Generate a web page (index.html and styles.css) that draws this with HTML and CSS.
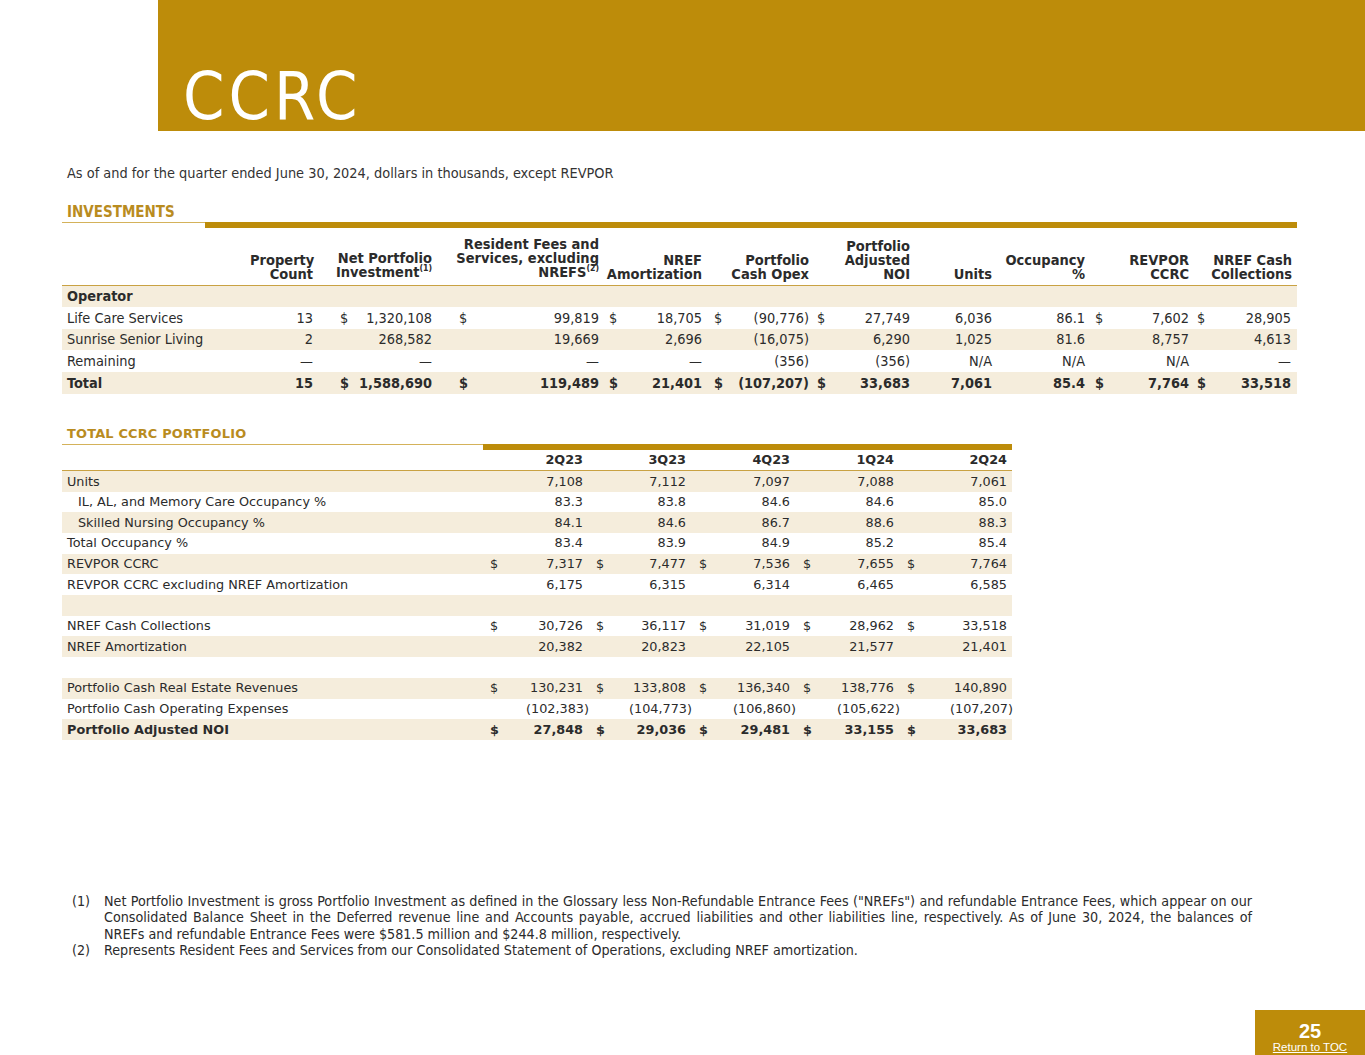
FILE: index.html
```html
<!DOCTYPE html>
<html>
<head>
<meta charset="utf-8">
<link rel="stylesheet" href="styles.css">
</head>
<body>
<div class="page">
  <header class="hero">
    <div class="hero-bar"><h1 class="hero-title">CCRC</h1></div>
  </header>

  <main class="content">
    <p class="subtitle">As of and for the quarter ended June 30, 2024, dollars in thousands, except REVPOR</p>

    <section class="sec sec-inv">
      <h2 class="sec-title">INVESTMENTS</h2>
      <div class="rule"><span class="rule-thin rule-thin-inv"></span><span class="rule-thick"></span></div>
      <table class="tbl tbl-inv">
        <colgroup>
          <col style="width:188px"><col style="width:68px"><col style="width:32px"><col style="width:87px">
          <col style="width:33px"><col style="width:134px"><col style="width:18px"><col style="width:85px">
          <col style="width:18px"><col style="width:89px"><col style="width:16px"><col style="width:85px">
          <col style="width:82px"><col style="width:93px"><col style="width:17px"><col style="width:87px">
          <col style="width:16px"><col style="width:87px">
        </colgroup>
        <thead>
          <tr>
            <th></th>
            <th class="num">Property<br>Count</th>
            <th class="num" colspan="2">Net Portfolio<br>Investment<sup>(1)</sup></th>
            <th class="num" colspan="2">Resident Fees and<br>Services, excluding<br>NREFS<sup>(2)</sup></th>
            <th class="num" colspan="2">NREF<br>Amortization</th>
            <th class="num" colspan="2">Portfolio<br>Cash Opex</th>
            <th class="num" colspan="2">Portfolio<br>Adjusted<br>NOI</th>
            <th class="num">Units</th>
            <th class="num">Occupancy<br>%</th>
            <th class="num" colspan="2">REVPOR<br>CCRC</th>
            <th class="num" colspan="2">NREF Cash<br>Collections</th>
          </tr>
        </thead>
        <tbody>
          <tr class="shade op"><td colspan="18">Operator</td></tr>
          <tr>
            <td>Life Care Services</td><td class="num">13</td>
            <td class="d d1">$</td><td class="num">1,320,108</td>
            <td class="d d1">$</td><td class="num">99,819</td>
            <td class="d">$</td><td class="num">18,705</td>
            <td class="d d2">$</td><td class="num">(90,776)</td>
            <td class="d d3">$</td><td class="num">27,749</td>
            <td class="num">6,036</td><td class="num">86.1</td>
            <td class="d">$</td><td class="num">7,602</td>
            <td class="d d3">$</td><td class="num">28,905</td>
          </tr>
          <tr class="shade">
            <td>Sunrise Senior Living</td><td class="num">2</td>
            <td class="d"></td><td class="num">268,582</td>
            <td class="d"></td><td class="num">19,669</td>
            <td class="d"></td><td class="num">2,696</td>
            <td class="d"></td><td class="num">(16,075)</td>
            <td class="d"></td><td class="num">6,290</td>
            <td class="num">1,025</td><td class="num">81.6</td>
            <td class="d"></td><td class="num">8,757</td>
            <td class="d"></td><td class="num">4,613</td>
          </tr>
          <tr>
            <td>Remaining</td><td class="num">—</td>
            <td class="d"></td><td class="num">—</td>
            <td class="d"></td><td class="num">—</td>
            <td class="d"></td><td class="num">—</td>
            <td class="d"></td><td class="num">(356)</td>
            <td class="d"></td><td class="num">(356)</td>
            <td class="num">N/A</td><td class="num">N/A</td>
            <td class="d"></td><td class="num">N/A</td>
            <td class="d"></td><td class="num">—</td>
          </tr>
          <tr class="shade total">
            <td>Total</td><td class="num">15</td>
            <td class="d d1">$</td><td class="num">1,588,690</td>
            <td class="d d1">$</td><td class="num">119,489</td>
            <td class="d">$</td><td class="num">21,401</td>
            <td class="d d2">$</td><td class="num">(107,207)</td>
            <td class="d d3">$</td><td class="num">33,683</td>
            <td class="num">7,061</td><td class="num">85.4</td>
            <td class="d">$</td><td class="num">7,764</td>
            <td class="d d3">$</td><td class="num">33,518</td>
          </tr>
        </tbody>
      </table>
    </section>

    <section class="sec sec-port">
      <h2 class="sec-title sec-title-wide">TOTAL CCRC PORTFOLIO</h2>
      <div class="rule rule-port"><span class="rule-thin rule-thin-port"></span><span class="rule-thick"></span></div>
      <table class="tbl tbl-port">
        <colgroup>
          <col style="width:420px"><col style="width:20px"><col style="width:86px"><col style="width:20px">
          <col style="width:83px"><col style="width:20px"><col style="width:84px"><col style="width:20px">
          <col style="width:84px"><col style="width:20px"><col style="width:93px">
        </colgroup>
        <thead>
          <tr>
            <th></th>
            <th class="num" colspan="2">2Q23</th>
            <th class="num" colspan="2">3Q23</th>
            <th class="num" colspan="2">4Q23</th>
            <th class="num" colspan="2">1Q24</th>
            <th class="num" colspan="2">2Q24</th>
          </tr>
        </thead>
        <tbody>
          <tr class="shade"><td>Units</td><td></td><td class="num">7,108</td><td></td><td class="num">7,112</td><td></td><td class="num">7,097</td><td></td><td class="num">7,088</td><td></td><td class="num">7,061</td></tr>
          <tr><td class="ind">IL, AL, and Memory Care Occupancy %</td><td></td><td class="num">83.3</td><td></td><td class="num">83.8</td><td></td><td class="num">84.6</td><td></td><td class="num">84.6</td><td></td><td class="num">85.0</td></tr>
          <tr class="shade"><td class="ind">Skilled Nursing Occupancy %</td><td></td><td class="num">84.1</td><td></td><td class="num">84.6</td><td></td><td class="num">86.7</td><td></td><td class="num">88.6</td><td></td><td class="num">88.3</td></tr>
          <tr><td>Total Occupancy %</td><td></td><td class="num">83.4</td><td></td><td class="num">83.9</td><td></td><td class="num">84.9</td><td></td><td class="num">85.2</td><td></td><td class="num">85.4</td></tr>
          <tr class="shade"><td>REVPOR CCRC</td><td class="d">$</td><td class="num">7,317</td><td class="d">$</td><td class="num">7,477</td><td class="d">$</td><td class="num">7,536</td><td class="d">$</td><td class="num">7,655</td><td class="d">$</td><td class="num">7,764</td></tr>
          <tr><td>REVPOR CCRC excluding NREF Amortization</td><td></td><td class="num">6,175</td><td></td><td class="num">6,315</td><td></td><td class="num">6,314</td><td></td><td class="num">6,465</td><td></td><td class="num">6,585</td></tr>
          <tr class="shade"><td colspan="11"></td></tr>
          <tr><td>NREF Cash Collections</td><td class="d">$</td><td class="num">30,726</td><td class="d">$</td><td class="num">36,117</td><td class="d">$</td><td class="num">31,019</td><td class="d">$</td><td class="num">28,962</td><td class="d">$</td><td class="num">33,518</td></tr>
          <tr class="shade"><td>NREF Amortization</td><td></td><td class="num">20,382</td><td></td><td class="num">20,823</td><td></td><td class="num">22,105</td><td></td><td class="num">21,577</td><td></td><td class="num">21,401</td></tr>
          <tr><td colspan="11"></td></tr>
          <tr class="shade"><td>Portfolio Cash Real Estate Revenues</td><td class="d">$</td><td class="num">130,231</td><td class="d">$</td><td class="num">133,808</td><td class="d">$</td><td class="num">136,340</td><td class="d">$</td><td class="num">138,776</td><td class="d">$</td><td class="num">140,890</td></tr>
          <tr><td>Portfolio Cash Operating Expenses</td><td></td><td class="num"><span class="neg">(102,383)</span></td><td></td><td class="num"><span class="neg">(104,773)</span></td><td></td><td class="num"><span class="neg">(106,860)</span></td><td></td><td class="num"><span class="neg">(105,622)</span></td><td></td><td class="num"><span class="neg">(107,207)</span></td></tr>
          <tr class="shade total"><td>Portfolio Adjusted NOI</td><td class="d">$</td><td class="num">27,848</td><td class="d">$</td><td class="num">29,036</td><td class="d">$</td><td class="num">29,481</td><td class="d">$</td><td class="num">33,155</td><td class="d">$</td><td class="num">33,683</td></tr>
        </tbody>
      </table>
    </section>

    <section class="notes">
      <div class="note"><span class="note-n">(1)</span><p class="note-t"><span class="jl">Net Portfolio Investment is gross Portfolio Investment as defined in the Glossary less Non-Refundable Entrance Fees ("NREFs") and refundable Entrance Fees, which appear on our</span> <span class="jl">Consolidated Balance Sheet in the Deferred revenue line and Accounts payable, accrued liabilities and other liabilities line, respectively. As of June 30, 2024, the balances of</span> <span class="jl-last">NREFs and refundable Entrance Fees were $581.5 million and $244.8 million, respectively.</span></p></div>
      <div class="note"><span class="note-n">(2)</span><p class="note-t">Represents Resident Fees and Services from our Consolidated Statement of Operations, excluding NREF amortization.</p></div>
    </section>
  </main>

  <footer class="pager">
    <div class="pager-box"><span class="pager-num">25</span><a class="pager-link" href="#">Return to TOC</a></div>
  </footer>
</div>
</body>
</html>
```

FILE: styles.css
```css
* { box-sizing: border-box; }
html, body { margin: 0; padding: 0; }
body {
  width: 1365px;
  height: 1055px;
  background: #fff;
  color: #2b2b2b;
  font-family: "DejaVu Sans Condensed", "Liberation Sans", sans-serif;
  font-stretch: condensed;
  overflow: hidden;
}
.page { position: relative; width: 1365px; height: 1055px; }

.hero { padding-left: 158px; }
.hero-bar {
  height: 131px;
  background: #bd8c0a;
  display: flex;
  align-items: flex-end;
  padding-left: 25px;
  padding-bottom: 1px;
}
.hero-title {
  margin: 0;
  color: #fff;
  font-weight: 400;
  font-size: 66px;
  line-height: 1;
  letter-spacing: 4px;
}

.content { padding-left: 62px; }
.subtitle {
  margin: 0;
  padding-top: 33px;
  padding-left: 5px;
  font-size: 14.4px;
  line-height: 18px;
  color: #333;
}

.sec-inv { margin-top: 22px; width: 1235px; }
.sec-port { margin-top: 31px; width: 950px; }
.sec-title {
  margin: 0 0 1px 5px;
  font-size: 15px;
  line-height: 17px;
  font-weight: 700;
  color: #b98c1f;
}
.sec-title-wide {
  font-family: "DejaVu Sans", sans-serif;
  font-stretch: normal;
  font-size: 12.9px;
  letter-spacing: 0.2px;
  margin-bottom: 2px;
}
.rule { display: flex; align-items: flex-start; height: 6px; }
.rule-thin { height: 1px; background: #d4b25a; }
.rule-thin-inv { width: 143px; }
.rule-thin-port { width: 421px; }
.rule-thick { flex: 1; height: 6px; background: #bd8c0a; }

.tbl {
  border-collapse: collapse;
  table-layout: fixed;
  width: 100%;
}
.tbl td, .tbl th { padding: 0; white-space: nowrap; overflow: visible; }
.tbl th {
  font-weight: 700;
  vertical-align: bottom;
  color: #2b2b2b;
}
.tbl thead tr { border-bottom: 1px solid #c9a243; }
.tbl td:first-child { padding-left: 5px; }
.num { text-align: right; padding-right: 5px !important; }
.shade { background: #f5eddc; }
.total td { font-weight: 700; }
.op td { font-weight: 700; }
sup { font-size: 0.6em; vertical-align: 0; position: relative; top: -0.6em; }

/* investments table */
.tbl-inv { font-size: 14.4px; }
.tbl-inv thead th { font-size: 14.5px; line-height: 14px; padding-bottom: 4px; height: 57px; }
.tbl-inv tbody tr { height: 21.8px; }
.tbl-inv td { line-height: 18px; }
.tbl-inv .d { text-align: left; padding-left: 5px; }
.tbl-inv .d1 { padding-left: 22px; }
.tbl-inv .d2 { padding-left: 7px; }
.tbl-inv .d3 { padding-left: 3px; }
.tbl-inv tbody td:last-child.num { padding-right: 6px !important; }

/* portfolio table */
.tbl-port {
  font-family: "DejaVu Sans", sans-serif;
  font-stretch: normal;
  font-size: 12.8px;
}
.tbl-port thead th { height: 21px; line-height: 16px; padding-bottom: 2px; font-size: 12.8px; }
.tbl-port tbody tr { height: 20.7px; }
.tbl-port td { line-height: 16px; }
.tbl-port .d { text-align: left; padding-left: 8px; }
.tbl-port .ind { padding-left: 16px !important; }
.neg { margin-right: -6px; }

.notes {
  margin-top: 153px;
  width: 1190px;
  padding-left: 10px;
  font-size: 14.2px;
  line-height: 16.5px;
  color: #2b2b2b;
}
.note { display: flex; }
.note-n { flex: 0 0 32px; }
.note-t { margin: 0; flex: 1; text-align: justify; }
.jl { display: block; text-align: justify; text-align-last: justify; }
.jl-last { display: block; }

.pager { position: absolute; right: 0; bottom: 0; }
.pager-box {
  width: 110px;
  height: 45px;
  background: #bd8c0a;
  display: flex;
  flex-direction: column;
  align-items: center;
  justify-content: flex-end;
  padding-bottom: 1px;
}
.pager-num {
  color: #fff;
  font-family: "Liberation Sans", sans-serif;
  font-stretch: normal;
  font-weight: 700;
  font-size: 20px;
  line-height: 18px;
}
.pager-link {
  color: #fff;
  font-family: "Liberation Sans", sans-serif;
  font-stretch: normal;
  font-size: 11.5px;
  line-height: 14px;
  text-decoration: underline;
}
```
